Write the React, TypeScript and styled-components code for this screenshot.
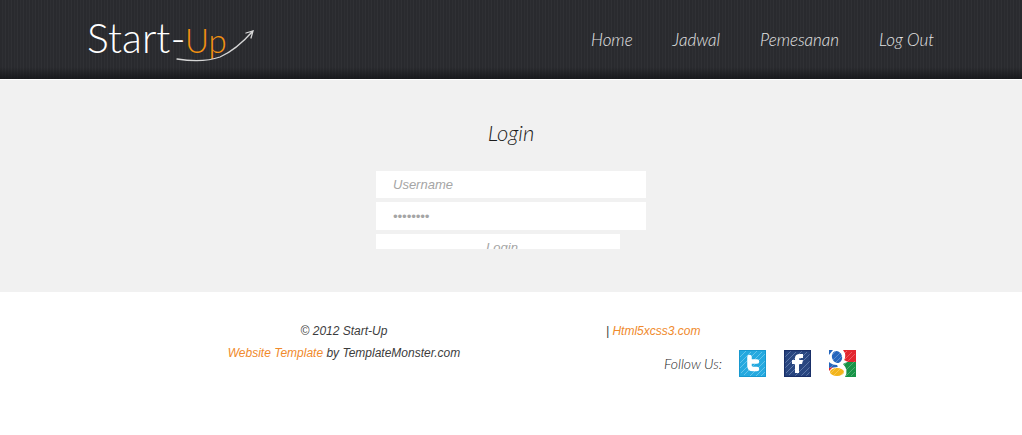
import React from 'react';
import styled, { createGlobalStyle } from 'styled-components';

const script = 'Lato, sans-serif';

const GlobalStyle = createGlobalStyle`
  * { box-sizing: border-box; }
  body {
    margin: 0;
    background: #fff;
    color: #3c3c3c;
    font: italic 13px/22px "Liberation Sans", Arial, sans-serif;
  }
`;

const Container = styled.div`
  width: 100%;
  max-width: 846px;
  margin: 0 auto;
`;

const Header = styled.header`
  padding: 0 24px;
  border-bottom: 1px solid #fff;
  background:
    linear-gradient(to bottom, transparent 85%, rgba(18, 19, 22, 0.75) 100%),
    repeating-linear-gradient(to right, #292a2e 0 2px, #2e2f33 2px 3px, #2a2b2f 3px 5px, #303135 5px 6px);
`;

const Bar = styled(Container)`
  display: flex;
  justify-content: space-between;
  align-items: center;
  height: 79px;
`;

const LogoLink = styled.a`
  display: block;
  line-height: 0;
`;

const Menu = styled.nav`
  display: flex;
  gap: 40px;
`;

const MenuLink = styled.a`
  color: #e4e4e4;
  font: italic 300 17px/24px ${script};
  text-decoration: none;
`;

const Main = styled.main`
  padding: 38px 24px 43px;
  background: #f1f1f1;
`;

const Title = styled.h1`
  margin: 0 0 23px;
  color: #1c1c1c;
  font: italic 300 22px/30px ${script};
  text-align: center;
`;

const Form = styled.form`
  display: flex;
  flex-direction: column;
  gap: 4px;
  width: 270px;
  margin: 0 auto;
`;

const Field = styled.input`
  width: 100%;
  height: 28px;
  padding: 0 17px;
  border: 0;
  background: #fff;
  color: #a5a5a5;
  font: inherit;
  &::placeholder { color: #a5a5a5; opacity: 1; }
  &:first-child { height: 27px; }
`;

const Submit = styled.button`
  width: 244px;
  height: 15px;
  padding: 2px 0 0 8px;
  border: 0;
  overflow: hidden;
  background: #fff;
  color: #a5a5a5;
  font: inherit;
`;

const SubmitText = styled.span`
  display: block;
  height: 12px;
  overflow: hidden;
`;

const Footer = styled.footer`
  padding: 28px 24px;
  font-size: 12px;
`;

const Columns = styled(Container)`
  display: grid;
  grid-template-columns: 512px 1fr;
  column-gap: 6px;
`;

const Copyright = styled.div`
  text-align: center;
`;

const Accent = styled.a`
  color: #f08a2c;
  text-decoration: none;
`;

const Follow = styled.div`
  display: flex;
  align-items: center;
  gap: 18px;
  padding: 8px 0 0 58px;
`;

const FollowLabel = styled.span`
  width: 57px;
  color: #1c1c1c;
  font: italic 300 14px/24px ${script};
  white-space: nowrap;
`;

const Social = styled.a`
  display: block;
  width: 27px;
  height: 27px;
  svg { display: block; }
`;

const LogoText = styled.text<{ $size: number }>`
  font: normal 300 ${({ $size }) => $size}px Lato, sans-serif;
`;

const Logo = () => (
  <svg width="168" height="54" viewBox="0 0 168 54" role="img" aria-label="Start-Up">
    <LogoText $size={41} x="-1" y="40" fill="#fff">Start-</LogoText>
    <LogoText $size={33} x="97" y="40" fill="#f29111">Up</LogoText>
    <path d="M89 46 Q115 50 132 44 Q148 37 165 18 M158 20 L165 18 L163 25 M160 23 L164 19" fill="none" stroke="#d6d6d6" strokeWidth="1.3" strokeLinecap="round" />
  </svg>
);

const Hatch = ({ color }: { color: string }) => (
  <path
    d="M1 7L7 1M1 13L12 2M1 18L18 1M2 23L23 2M5 25L26 4M11 26L26 11M17 26L26 17M22 26L26 22"
    stroke={color}
    strokeWidth="1"
    opacity=".5"
  />
);

const Twitter = () => (
  <svg width="27" height="27" viewBox="0 0 27 27">
    <path fill="#25a9df" d="M0 0H27V27H0Z" />
    <Hatch color="#a2e0f7" />
    <path d="M.5.5H26.5V26.5H.5Z" fill="none" stroke="#1798cf" />
    <path d="M10.5 7V16Q10.5 19 14 19H18M11 11.5H18" fill="none" stroke="#fff" strokeWidth="4.5" strokeLinecap="round" strokeLinejoin="round" />
  </svg>
);

const Facebook = () => (
  <svg width="27" height="27" viewBox="0 0 27 27">
    <path fill="#294680" d="M0 0H27V27H0Z" />
    <Hatch color="#91a6d0" />
    <path d="M.5.5H26.5V26.5H.5Z" fill="none" stroke="#192f68" strokeWidth="1.5" />
    <path d="M11 23V14H8V10H11V8Q11 4 16 4H19V8H17Q15 8 15 9V10H19L18 14H15V23Z" fill="#fff" />
  </svg>
);

const Google = () => (
  <svg width="27" height="27" viewBox="0 0 27 27">
    <path fill="#fff" d="M0 0H27V27H0Z" />
    <path fill="#e3262f" d="M14 0H27V12H19L15 10Q18 5 14 0Z" />
    <path fill="#189447" d="M18 12H27V27H16Q20 20 14 14Z" />
    <path fill="#2465bd" d="M0 0H4L0 5ZM0 12Q3 15 8 15L9 17L0 18Z" />
    <ellipse cx="8" cy="7" rx="5" ry="6" fill="#2465bd" transform="rotate(-20 8 7)" />
    <ellipse cx="8" cy="22" rx="7" ry="4" fill="#f3b51b" />
    <path fill="#e3262f" d="M0 18L4 17L0 21Z" />
    <g opacity=".5"><Hatch color="#fff" /></g>
  </svg>
);

export default function App() {
  return (
    <>
      <GlobalStyle />
      <Header>
        <Bar>
          <LogoLink href="#"><Logo /></LogoLink>
          <Menu>
            {['Home', 'Jadwal', 'Pemesanan', 'Log Out'].map((item) => (
              <MenuLink href="#" key={item}>{item}</MenuLink>
            ))}
          </Menu>
        </Bar>
      </Header>
      <Main>
        <Title>Login</Title>
        <Form onSubmit={(e) => e.preventDefault()}>
          <Field type="text" placeholder="Username" aria-label="Username" />
          <Field type="password" placeholder="••••••••" aria-label="Password" />
          <Submit type="submit"><SubmitText>Login</SubmitText></Submit>
        </Form>
      </Main>
      <Footer>
        <Columns>
          <Copyright>
            <div>© 2012 Start-Up</div>
            <div><Accent href="#">Website Template</Accent> by TemplateMonster.com</div>
          </Copyright>
          <div>
            <div>| <Accent href="#">Html5xcss3.com</Accent></div>
            <Follow>
              <FollowLabel>Follow Us:</FollowLabel>
              <Social href="#" aria-label="Twitter"><Twitter /></Social>
              <Social href="#" aria-label="Facebook"><Facebook /></Social>
              <Social href="#" aria-label="Google"><Google /></Social>
            </Follow>
          </div>
        </Columns>
      </Footer>
    </>
  );
}
